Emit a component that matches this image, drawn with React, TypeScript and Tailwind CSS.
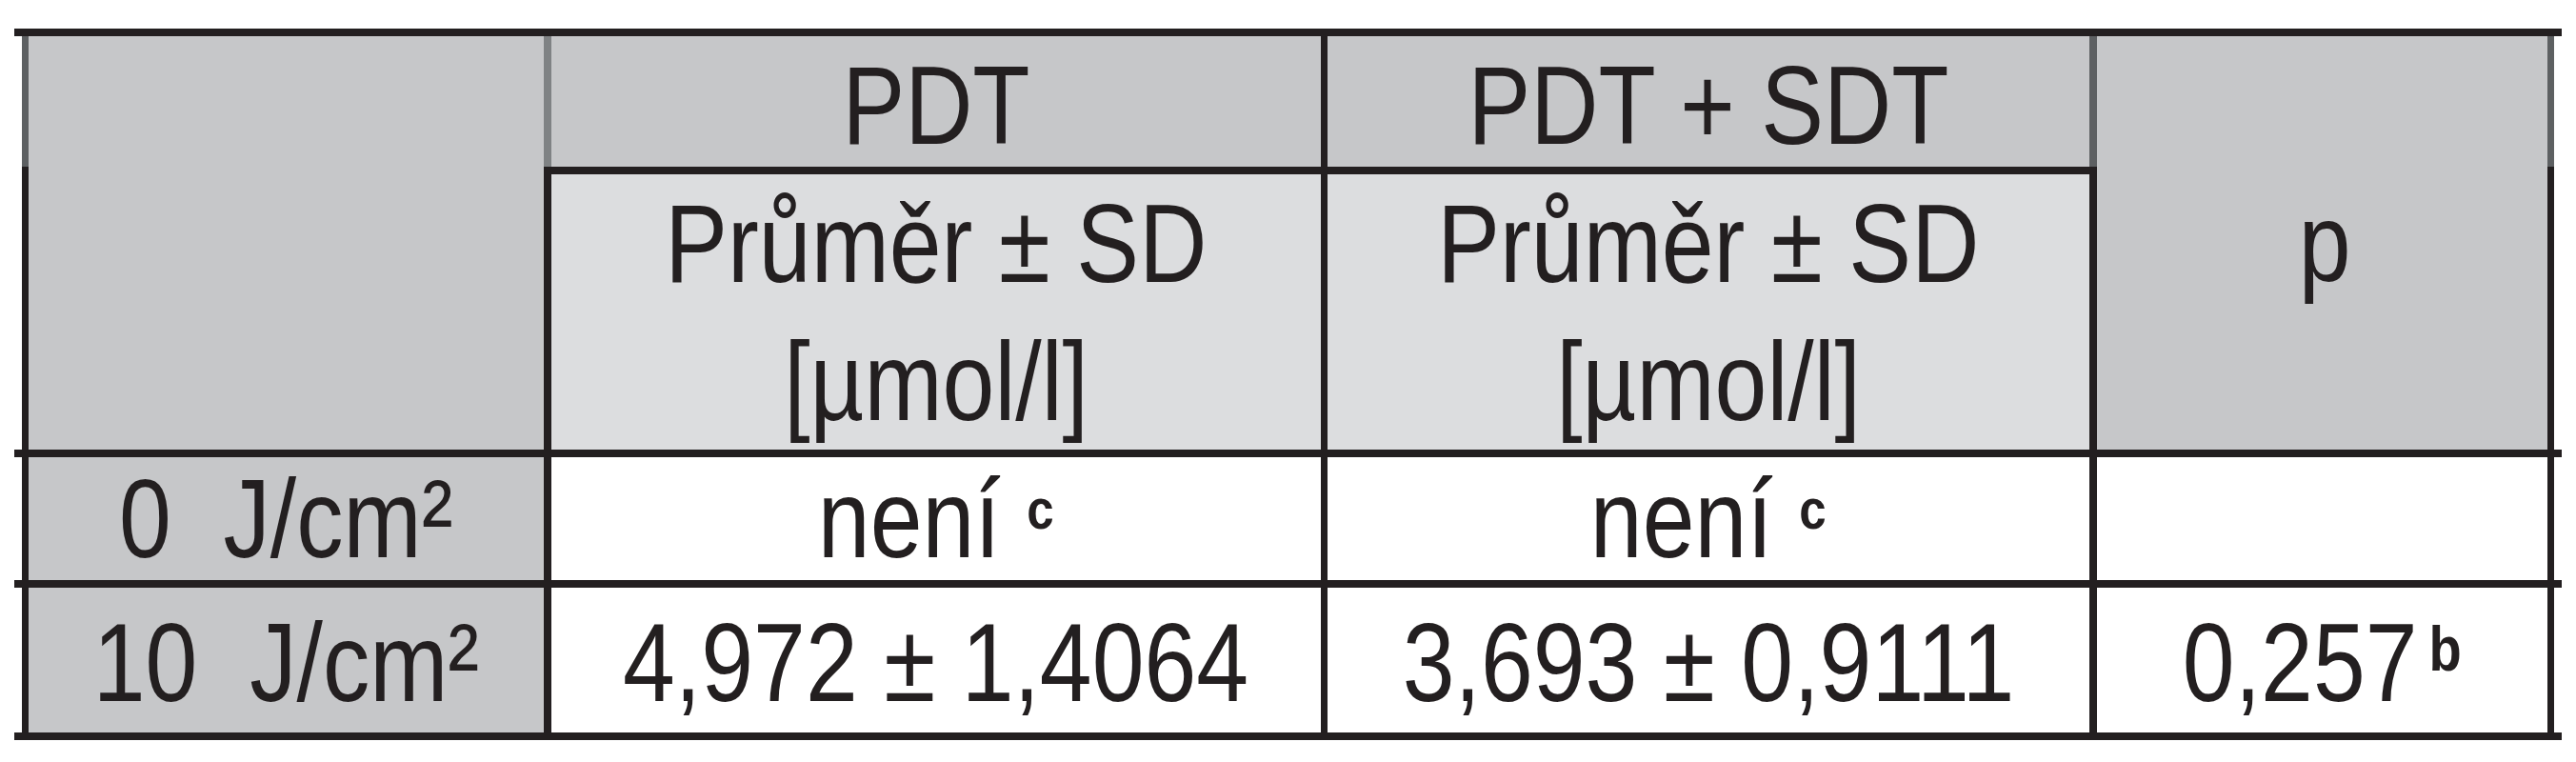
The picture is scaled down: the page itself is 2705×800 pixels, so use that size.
import React from 'react';

const DARK = 'bg-[#231f20]';

// vertical rule for the header block: top part (first header row) is grey, rest black
const HeadRule = ({ w, top }: { w: string; top: string }) => (
  <div className={`flex flex-col ${w}`}>
    <div className={`h-[137px] ${top}`} />
    <div className={`flex-1 ${DARK}`} />
  </div>
);

const HLine = () => <div className={`h-[8px] w-full ${DARK}`} />;

// narrow text (the table is set in a condensed grotesk)
const T = ({ children }: { children: React.ReactNode }) => (
  <span className="inline-block scale-x-[0.85] whitespace-pre">{children}</span>
);

const BodyRow = ({
  label,
  pdt,
  sdt,
  p,
  h,
  pad,
}: {
  label: string;
  pdt: React.ReactNode;
  sdt: React.ReactNode;
  p: React.ReactNode;
  h: string;
  pad: string;
}) => (
  <div className={`mx-[8px] flex ${h}`}>
    <div className={`w-[7px] ${DARK}`} />
    <div className={`flex w-[541px] items-center justify-center bg-[#c6c7c9] ${pad}`}>
      <T>{label}</T>
    </div>
    <div className={`w-[8px] ${DARK}`} />
    <div className={`flex w-[808px] items-center justify-center bg-white ${pad}`}>
      <T>{pdt}</T>
    </div>
    <div className={`w-[7px] ${DARK}`} />
    <div className={`flex w-[800px] items-center justify-center bg-white ${pad}`}>
      <T>{sdt}</T>
    </div>
    <div className={`w-[8px] ${DARK}`} />
    <div className={`flex w-[473px] items-center justify-center bg-white ${pad}`}>
      <T>{p}</T>
    </div>
    <div className={`w-[7px] ${DARK}`} />
  </div>
);

const Neni = () => (
  <>
    není <span className="text-[60px] font-bold align-[30px]">c</span>
  </>
);

export default function App() {
  return (
    <div className="min-h-screen w-[2705px] bg-white pt-[30px] font-['Liberation_Sans',Arial,sans-serif] text-[116px] leading-none text-[#231f20]">
      <div className="ml-[15px] flex w-[2675px] flex-col">
        <HLine />

        {/* header */}
        <div className="mx-[8px] flex h-[434px]">
          <HeadRule w="w-[7px]" top="bg-[#5d6062]" />
          <div className="w-[541px] bg-[#c6c7c9]" />
          <HeadRule w="w-[8px]" top="bg-[#7f8284]" />
          <div className="flex w-[1615px] flex-col">
            <div className="flex h-[137px]">
              <div className="flex w-[808px] items-center justify-center bg-[#c6c7c9] pt-[8px]">
                <T>PDT</T>
              </div>
              <div className={`w-[7px] ${DARK}`} />
              <div className="flex w-[800px] items-center justify-center bg-[#c6c7c9] pt-[8px]">
                <T>PDT + SDT</T>
              </div>
            </div>
            <HLine />
            <div className="flex h-[289px]">
              <div className="flex w-[808px] flex-col items-center justify-center bg-[#dcdddf] pt-[2px] leading-[145px]">
                <T>Průměr ± SD</T>
                <T>[µmol/l]</T>
              </div>
              <div className={`w-[7px] ${DARK}`} />
              <div className="flex w-[800px] flex-col items-center justify-center bg-[#dcdddf] pt-[2px] leading-[145px]">
                <T>Průměr ± SD</T>
                <T>[µmol/l]</T>
              </div>
            </div>
          </div>
          <HeadRule w="w-[8px]" top="bg-[#5d6062]" />
          <div className="flex w-[473px] items-center justify-center bg-[#c6c7c9] pl-[6px]">
            <T>p</T>
          </div>
          <HeadRule w="w-[7px]" top="bg-[#5d6062]" />
        </div>

        <HLine />
        <BodyRow h="h-[129px]" pad="pt-0" label="0  J/cm²" pdt={<Neni />} sdt={<Neni />} p="" />
        <HLine />
        <BodyRow
          h="h-[152px]"
          pad="pt-[6px]"
          label="10  J/cm²"
          pdt="4,972 ± 1,4064"
          sdt="3,693 ± 0,9111"
          p={
            <>
              0,257<span className="ml-[14px] text-[66px] font-bold align-[32px]">b</span>
            </>
          }
        />
        <HLine />
      </div>
    </div>
  );
}
